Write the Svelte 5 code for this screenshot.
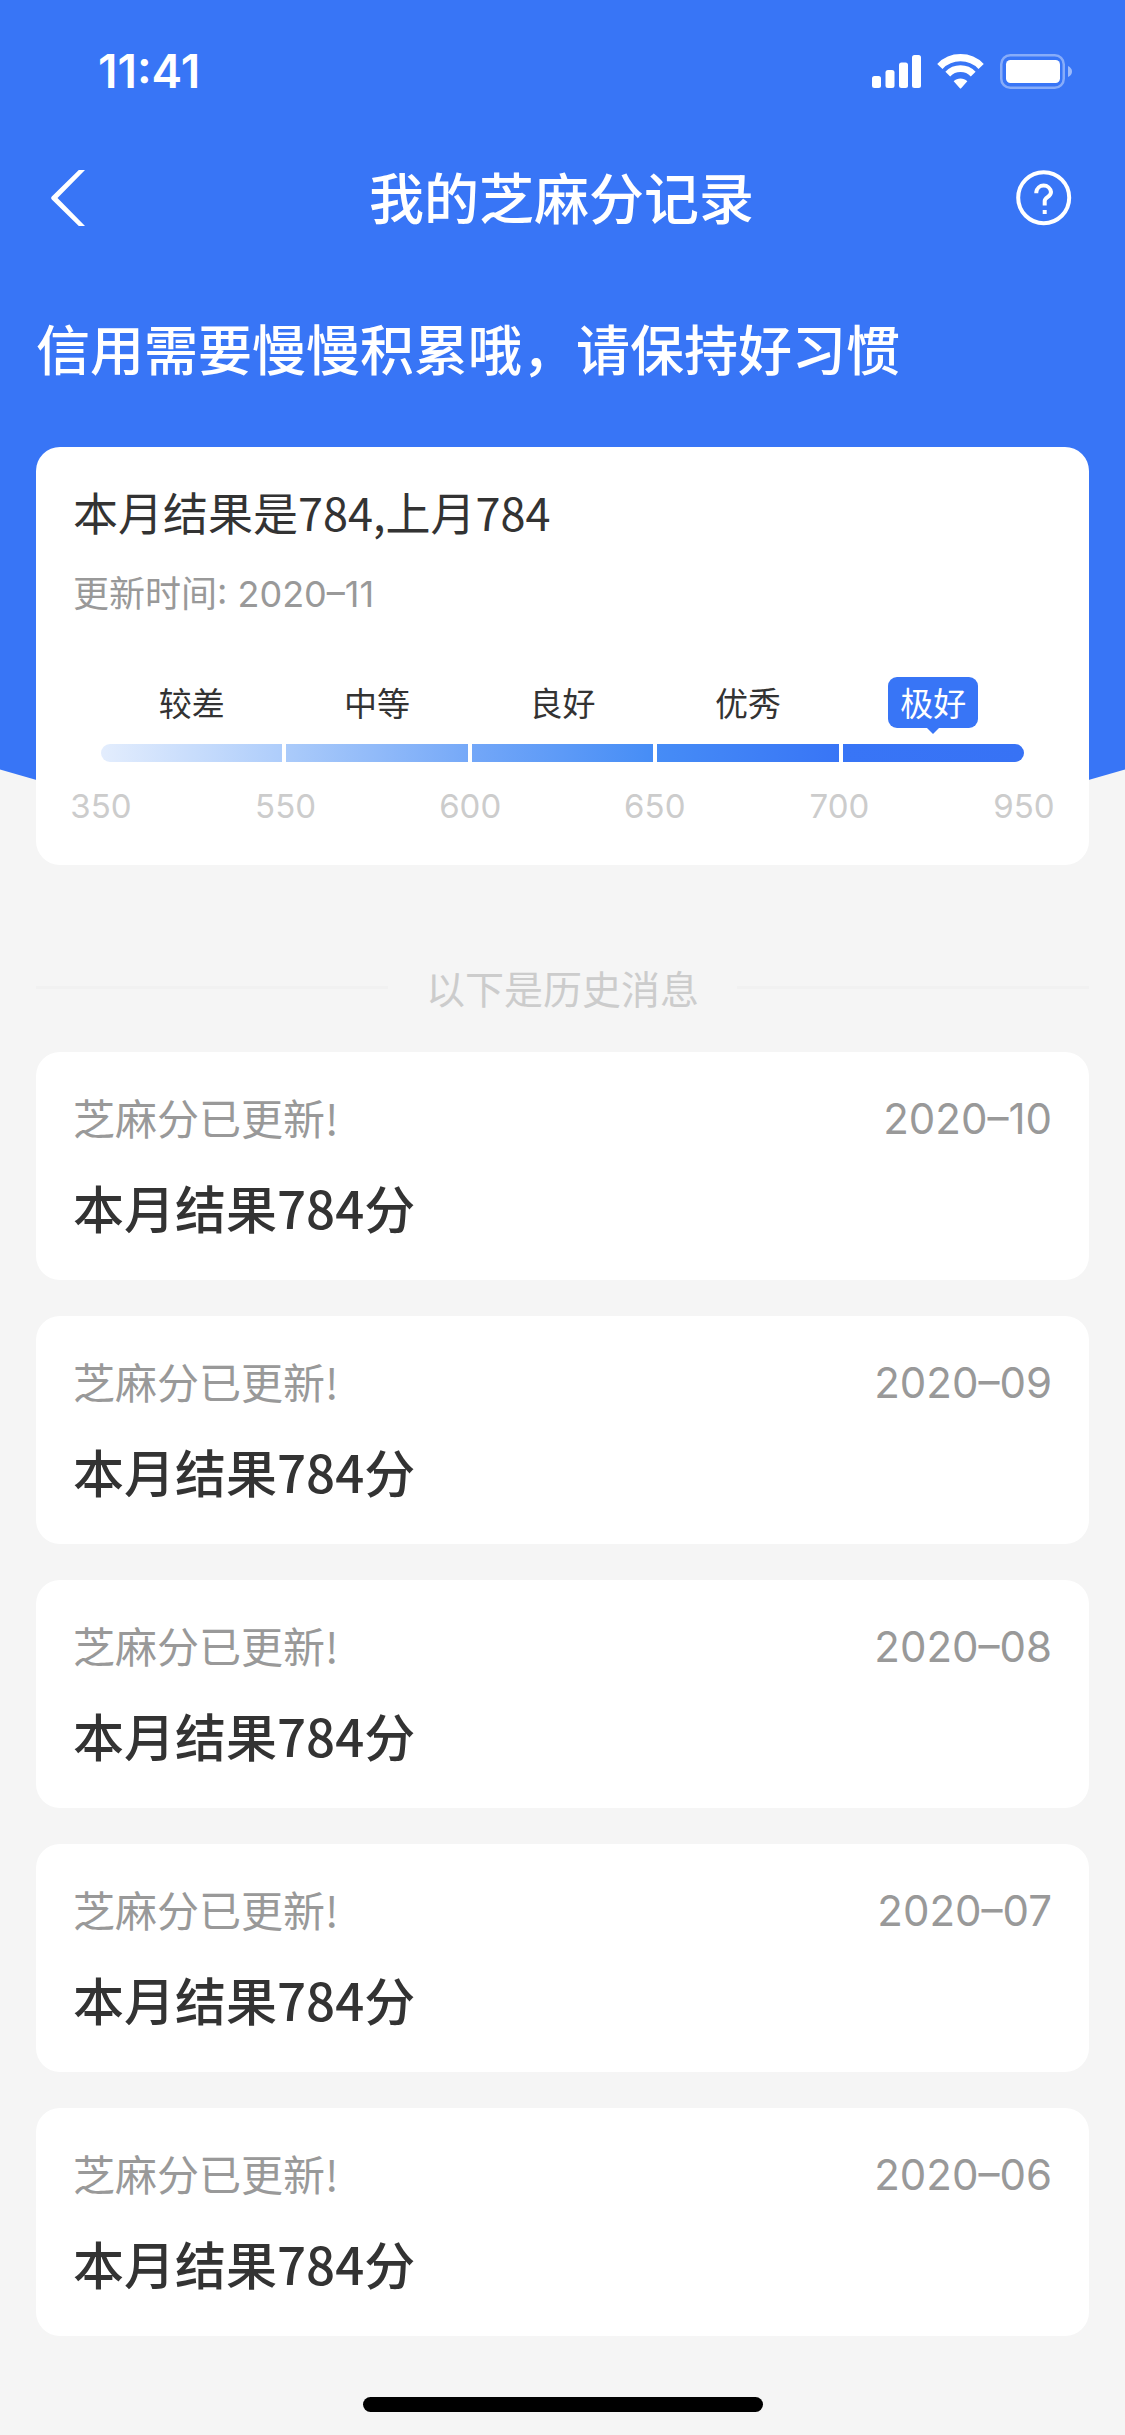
<script lang="ts">
    // Tramos de la escala de puntuación
    let levels = [
        { label: '较差', from: '#e3edfd', to: '#aecdfb' },
        { label: '中等', from: '#abcbfa', to: '#76a9f8' },
        { label: '良好', from: '#73a7f8', to: '#468df6' },
        { label: '优秀', from: '#468cf6', to: '#3875f6' },
        { label: '极好', from: '#3875f6', to: '#3772f5' }
    ];

    let ticks = [350, 550, 600, 650, 700, 950];
    let currentLevel = '极好';

    // Historial de meses anteriores
    let history = [
        { date: '2020–10', score: 784 },
        { date: '2020–09', score: 784 },
        { date: '2020–08', score: 784 },
        { date: '2020–07', score: 784 },
        { date: '2020–06', score: 784 }
    ];
</script>

<svelte:head>
    <title>我的芝麻分记录</title>
</svelte:head>

<div class="page">
    <div class="backdrop"></div>

    <div class="status-bar">
        <span class="clock">11:41</span>
        <div class="status-icons">
            <svg width="49" height="34" viewBox="0 0 49 34" fill="#fff">
                <rect x="0" y="22" width="9" height="12" rx="2.5" />
                <rect x="13.5" y="16" width="9" height="18" rx="2.5" />
                <rect x="27" y="8.5" width="9" height="25.5" rx="2.5" />
                <rect x="40" y="1" width="9" height="33" rx="2.5" />
            </svg>
            <svg width="47" height="35" viewBox="0 0 141 105" fill="none" stroke="#fff">
                <path d="M8.6 37.3a86 86 0 0 1 123.8 0" stroke-width="22" />
                <path d="M32.4 60.2a53 53 0 0 1 76.2 0" stroke-width="20" />
                <path d="M50 82c11-11 30-11 41 0l-18 20q-2.5 3-5 0z" fill="#fff" stroke="none" />
            </svg>
            <svg width="72" height="35" viewBox="0 0 72 35">
                <rect x="1.25" y="1.25" width="62.5" height="32.5" rx="9" fill="none" stroke="#fff" stroke-opacity="0.4" stroke-width="2.5" />
                <rect x="6" y="6" width="54" height="23" rx="4.5" fill="#fff" />
                <path d="M68 12q4 2 4 5.5t-4 5.5z" fill="#fff" fill-opacity="0.5" />
            </svg>
        </div>
    </div>

    <header class="nav">
        <button class="icon-button" aria-label="返回">
            <svg width="36" height="56" viewBox="0 0 36 56" fill="#fff">
                <path d="M27.8 0H34L6.5 28 34 56h-6.2L0.8 29.5q-1.3-1.5 0-3z" />
            </svg>
        </button>
        <h1>我的芝麻分记录</h1>
        <button class="icon-button" aria-label="帮助">
            <svg width="56" height="56" viewBox="0 0 56 56" fill="none" stroke="#fff" stroke-width="4">
                <circle cx="27.7" cy="27.7" r="25.5" />
                <path d="M20.3 23.3v-1.2a7.4 7.4 0 0 1 14.7 0c0 5-6.3 5-6.3 8.9v4.5" />
                <path d="M26.7 42h4" />
            </svg>
        </button>
    </header>

    <p class="slogan">信用需要慢慢积累哦，请保持好习惯</p>

    <main>
        <section class="card summary">
            <h2>本月结果是784,上月784</h2>
            <p class="updated">更新时间: 2020–11</p>

            <div class="scale">
                <div class="levels">
                    {#each levels as level}
                        <span class="level" class:current={level.label === currentLevel}>{level.label}</span>
                    {/each}
                </div>
                <div class="bar">
                    {#each levels as level}
                        <div class="segment" style="background: linear-gradient(90deg, {level.from}, {level.to})"></div>
                    {/each}
                </div>
            </div>
            <div class="ticks">
                {#each ticks as tick}
                    <span>{tick}</span>
                {/each}
            </div>
        </section>

        <div class="divider">以下是历史消息</div>

        <div class="history">
            {#each history as item}
                <article class="card record">
                    <div class="record-head">
                        <span>芝麻分已更新!</span>
                        <time>{item.date}</time>
                    </div>
                    <h3>本月结果{item.score}分</h3>
                </article>
            {/each}
        </div>
    </main>

    <div class="home-indicator"></div>
</div>

<style>
    :global(body) {
        background: #f5f5f5;
    }

    .page {
        position: relative;
        padding: 0 36px 23px;
        overflow: hidden;
        font-family: 'Noto Sans CJK SC', sans-serif;
        color: #333;
    }

    h1, h2, h3, p {
        margin: 0;
    }

    svg {
        display: block;
    }

    /* Fondo azul con el borde inferior curvado */
    .backdrop {
        position: absolute;
        top: 0;
        left: 0;
        right: 0;
        height: 852px;
        z-index: -1;
        background: #3875f6;
        clip-path: ellipse(174% 1956px at 50% -1104px);
    }

    .status-bar {
        display: flex;
        justify-content: space-between;
        align-items: center;
        height: 142px;
        padding: 0 17px 0 62px;
        color: #fff;
    }

    .clock {
        font-family: Inter, sans-serif;
        font-size: 46px;
        font-weight: 600;
    }

    .status-icons {
        display: flex;
        align-items: center;
        gap: 16px;
    }

    .nav {
        display: flex;
        justify-content: space-between;
        align-items: center;
        height: 112px;
        padding: 0 17px 0 15px;
        color: #fff;
    }

    .icon-button {
        display: flex;
        width: 56px;
        padding: 0;
        border: none;
        background: none;
        cursor: pointer;
    }

    h1 {
        padding-bottom: 6px;
        font-size: 55px;
        line-height: 80px;
        font-weight: 500;
    }

    .slogan {
        padding: 54px 0 59px;
        font-size: 54px;
        line-height: 80px;
        font-weight: 500;
        color: #fff;
    }

    .card {
        background: #fff;
        border-radius: 24px;
    }

    .summary {
        padding: 35px 29px 39px;
    }

    h2 {
        padding: 0 8px;
        font-size: 45px;
        line-height: 60px;
        font-weight: 400;
    }

    .updated {
        margin-top: 27px;
        padding: 0 8px;
        font-family: Inter, 'Noto Sans CJK SC', sans-serif;
        font-size: 36px;
        line-height: 50px;
        color: #999;
    }

    .scale {
        margin-top: 58px;
        padding: 0 36px;
    }

    .levels {
        display: grid;
        grid-template-columns: repeat(5, 1fr);
        justify-items: center;
        gap: 4px;
    }

    .level {
        position: relative;
        padding: 0 12px;
        border-radius: 9px;
        font-size: 33px;
        line-height: 51px;
    }

    .level.current {
        background: #3875f6;
        color: #fff;
    }

    .level.current::after {
        content: '';
        position: absolute;
        top: 100%;
        left: 50%;
        margin-left: -6px;
        border: 6px solid transparent;
        border-top-color: #3875f6;
        border-bottom: 0;
    }

    .bar {
        display: grid;
        grid-template-columns: repeat(5, 1fr);
        gap: 4px;
        margin-top: 16px;
        border-radius: 9px;
        overflow: hidden;
    }

    .segment {
        height: 18px;
    }

    .ticks {
        display: flex;
        justify-content: space-between;
        margin-top: 24px;
        font-family: Inter, sans-serif;
        font-size: 33px;
        line-height: 40px;
        color: #ccc;
    }

    .ticks span {
        width: 72px;
        text-align: center;
    }

    .divider {
        display: flex;
        align-items: center;
        gap: 38px;
        margin: 92px 0 35px;
        font-size: 39px;
        line-height: 60px;
        color: #ccc;
    }

    .divider::before, .divider::after {
        content: '';
        flex: 1;
        height: 3px;
        background: #f1f1f1;
    }

    .history {
        display: flex;
        flex-direction: column;
        gap: 36px;
    }

    .record {
        padding: 35px 37px 43px;
    }

    .record-head {
        display: flex;
        justify-content: space-between;
        font-size: 42px;
        line-height: 60px;
        color: #999;
    }

    time {
        padding-top: 2px;
        font-family: Inter, sans-serif;
    }

    h3 {
        margin-top: 28px;
        font-size: 51px;
        line-height: 60px;
        font-weight: 500;
    }

    .home-indicator {
        width: 400px;
        height: 15px;
        margin: 61px auto 0;
        border-radius: 8px;
        background: #000;
    }
</style>
